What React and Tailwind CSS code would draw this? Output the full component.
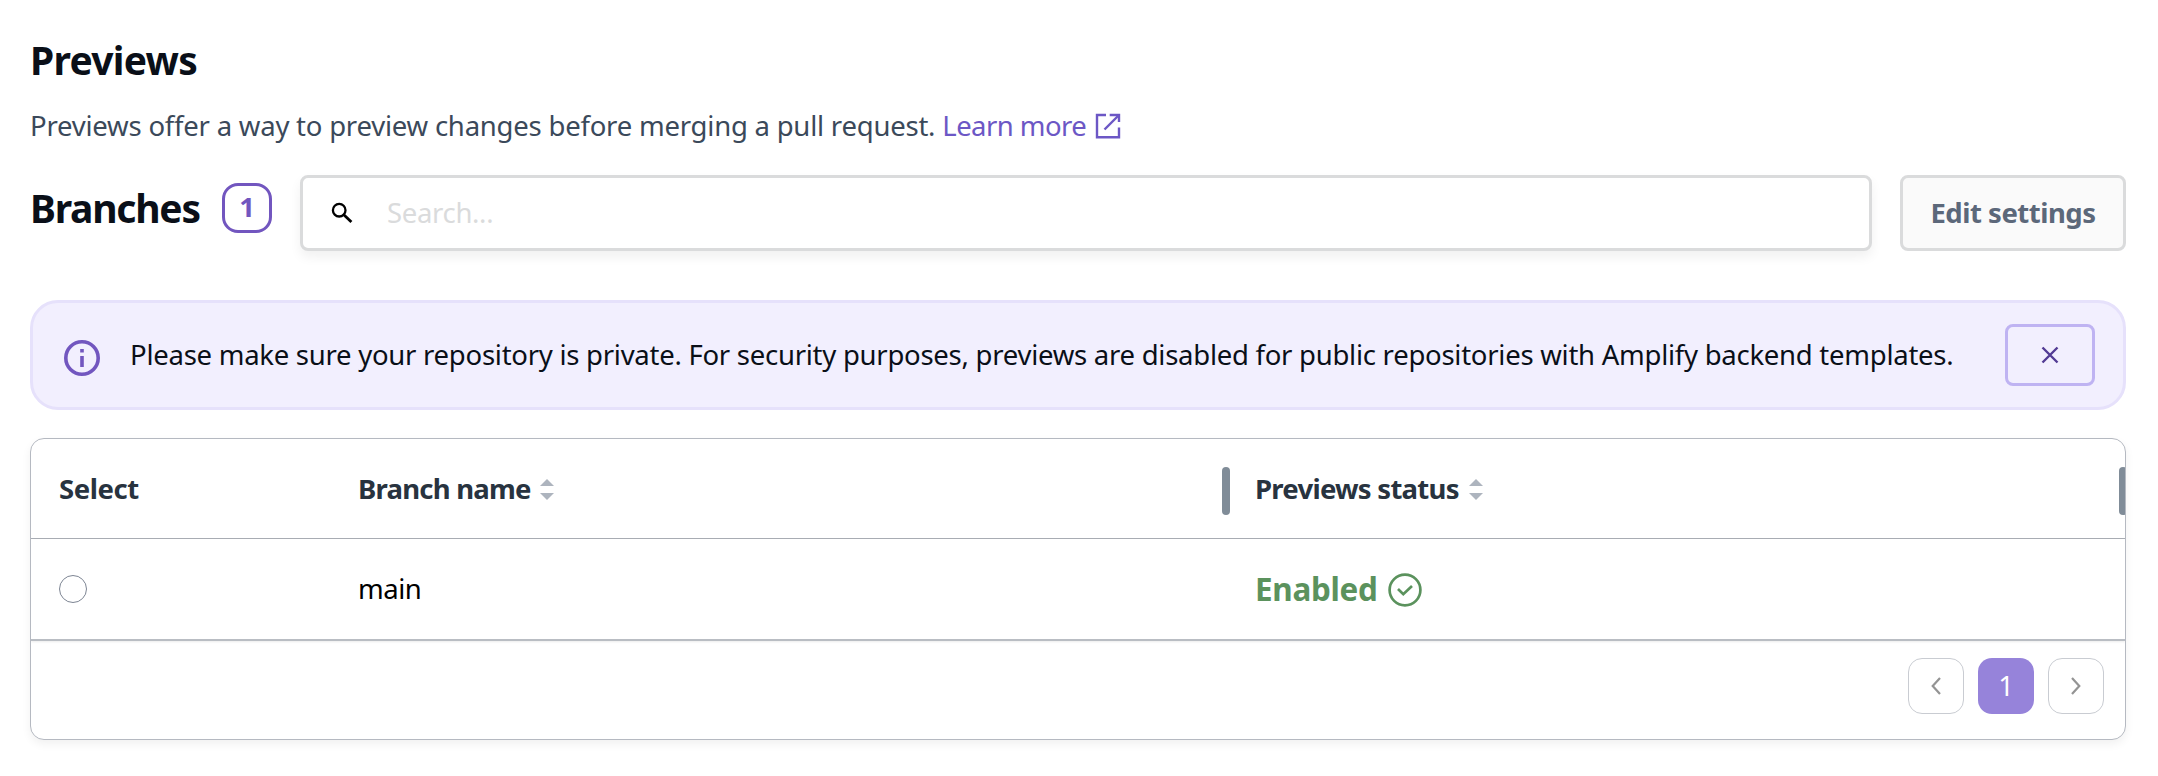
function SortIcon() {
  return (
    <svg width="14" height="21" viewBox="0 0 14 21" fill="#adb4be" className="shrink-0">
      <path d="M7 0L14 7H0z" />
      <path d="M7 21L0 14H14z" />
    </svg>
  );
}

function Chevron({ d }) {
  return (
    <svg width="10" height="18" viewBox="0 0 10 18" fill="none" stroke="#949494" strokeWidth="2.2">
      <path d={d} />
    </svg>
  );
}

function Header() {
  return (
    <header>
      <h1 className="h-12 text-[39px] leading-[48px] font-bold tracking-[-0.72px] text-[#0a0f18]">Previews</h1>
      <p className="mt-[22px] flex h-10 items-center leading-10 text-[#3b495a]">
        <span className="tracking-[-0.22px]">Previews offer a way to preview changes before merging a pull request.</span>
        <a className="ml-[7px] flex items-center text-[#6c57c5]">
          <span className="tracking-[-0.55px]">Learn more</span>
          <svg width="26" height="26" viewBox="0 0 26 26" fill="none" stroke="currentColor" strokeWidth="2.4" className="ml-[9px]">
            <path d="M11 2H2V24.2H24V14.5" />
            <path d="M14.7 2H24V9" />
            <path d="M9.5 16.5L24 2" />
          </svg>
        </a>
      </p>
    </header>
  );
}

function Toolbar() {
  return (
    <div className="mt-[29px] flex h-[76px]">
      <h2 className="mt-[9px] h-12 w-48 text-[39px] leading-[48px] font-bold tracking-[-1.24px] text-[#0a0f18]">Branches</h2>
      <span className="mt-2 flex size-[50px] justify-center rounded-2xl border-[3px] border-[#7256bf] pt-px leading-10 font-bold text-[#7256bf]">
        1
      </span>
      <label className="ml-7 flex flex-1 items-center rounded-lg border-[3px] border-[#dadbdc] bg-white pl-7 shadow-[0_6px_12px_rgba(0,0,0,0.06)]">
        <svg width="22" height="22" viewBox="0 0 22 22" fill="none" stroke="#000" className="shrink-0">
          <circle cx="8.2" cy="8.2" r="6.3" strokeWidth="2.3" />
          <path d="M12.8 12.8L20.4 20" strokeWidth="2.8" />
        </svg>
        <span className="ml-[34px] tracking-[-0.33px] text-[#dadbdc]">Search...</span>
      </label>
      <button className="ml-7 w-[226px] rounded-lg border-[3px] border-[#dadbdc] bg-[#fafafa] font-bold tracking-[-0.49px] text-[#5c687a]">
        Edit settings
      </button>
    </div>
  );
}

function Alert() {
  return (
    <div className="mt-[49px] flex h-[110px] items-center rounded-[28px] border-[3px] border-[#e6e1fb] bg-[#f2effe] pr-7 pl-[31px] text-[#0a0f18]">
      <svg width="36" height="36" viewBox="0 0 36 36" fill="#7256bf" className="relative top-[3px] shrink-0">
        <circle cx="18" cy="18" r="16.2" fill="none" stroke="#7256bf" strokeWidth="3.6" />
        <path d="M16.2 9h3.6v3.6h-3.6zM16.2 16h3.6v11h-3.6z" />
      </svg>
      <p className="ml-[30px] flex-1 pb-px tracking-[-0.26px] whitespace-nowrap">
        Please make sure your repository is private. For security purposes, previews are disabled for public repositories with Amplify backend templates.
      </p>
      <button className="flex h-[62px] w-[90px] items-center justify-center rounded-lg border-[3px] border-[#bfb3f2] text-[#523b94]">
        <svg width="18" height="18" viewBox="0 0 18 18" fill="none" stroke="currentColor" strokeWidth="2.4">
          <path d="M1.5 1.5L16.5 16.5M16.5 1.5L1.5 16.5" />
        </svg>
      </button>
    </div>
  );
}

function BranchTable() {
  return (
    <section className="mt-7 h-[302px] overflow-hidden rounded-[14px] border border-[#b5b9c1] bg-white shadow-[0_4px_10px_rgba(0,0,0,0.06)]">
      <div className="flex h-[100px] border-b border-[#a9adb4] leading-10 font-bold text-[#28333f]">
        <div className="w-[299px] pt-[30px] pl-7 tracking-[-0.44px]">Select</div>
        <div className="flex flex-1 justify-between pl-7">
          <div className="mt-[30px] flex h-10 items-center gap-[9px]">
            <span className="tracking-[-0.78px]">Branch name</span>
            <SortIcon />
          </div>
          <span className="mt-7 mr-[-1px] h-12 w-2 rounded-sm bg-[#808c98]" />
        </div>
        <div className="flex w-[896px] justify-between pl-[26px]">
          <div className="mt-[30px] flex h-10 items-center gap-2.5">
            <span className="tracking-[-0.74px]">Previews status</span>
            <SortIcon />
          </div>
          <span className="mt-7 mr-[-2px] h-12 w-2 rounded-sm bg-[#808c98]" />
        </div>
      </div>
      <div className="flex h-[102px] items-center border-b-2 border-[#b9bdc3] text-black shadow-[0_1px_2px_rgba(0,0,0,0.08)]">
        <div className="w-[299px] pl-7">
          <span className="block size-7 rounded-full border border-[#7d8593]" />
        </div>
        <div className="flex-1 pb-px pl-7 tracking-[-0.5px]">main</div>
        <div className="flex w-[896px] items-center gap-[11px] pl-[26px] text-[#5b925d]">
          <span className="text-[31.4px] font-bold tracking-[-0.3px]">Enabled</span>
          <svg width="34" height="34" viewBox="0 0 34 34" fill="none" stroke="currentColor" strokeWidth="2.7" className="relative top-px">
            <circle cx="17" cy="17" r="15.4" />
            <path d="M10 16L15.3 21.2L24 13" />
          </svg>
        </div>
      </div>
      <nav className="flex justify-end gap-3.5 pt-[17px] pr-[21px]">
        <button className="flex size-14 items-center justify-center rounded-[14px] border border-[#c9ccd2]">
          <Chevron d="M9 1L1.7 9L9 17" />
        </button>
        <button className="size-14 rounded-[14px] bg-[#9683da] text-white">1</button>
        <button className="flex size-14 items-center justify-center rounded-[14px] border border-[#c9ccd2]">
          <Chevron d="M1 1L8.3 9L1 17" />
        </button>
      </nav>
    </section>
  );
}

export default function App() {
  return (
    <main className="min-h-[776px] bg-white pt-9 pr-8 pl-[30px] font-['Noto_Sans',sans-serif] text-[27.5px]">
      <Header />
      <Toolbar />
      <Alert />
      <BranchTable />
    </main>
  );
}
